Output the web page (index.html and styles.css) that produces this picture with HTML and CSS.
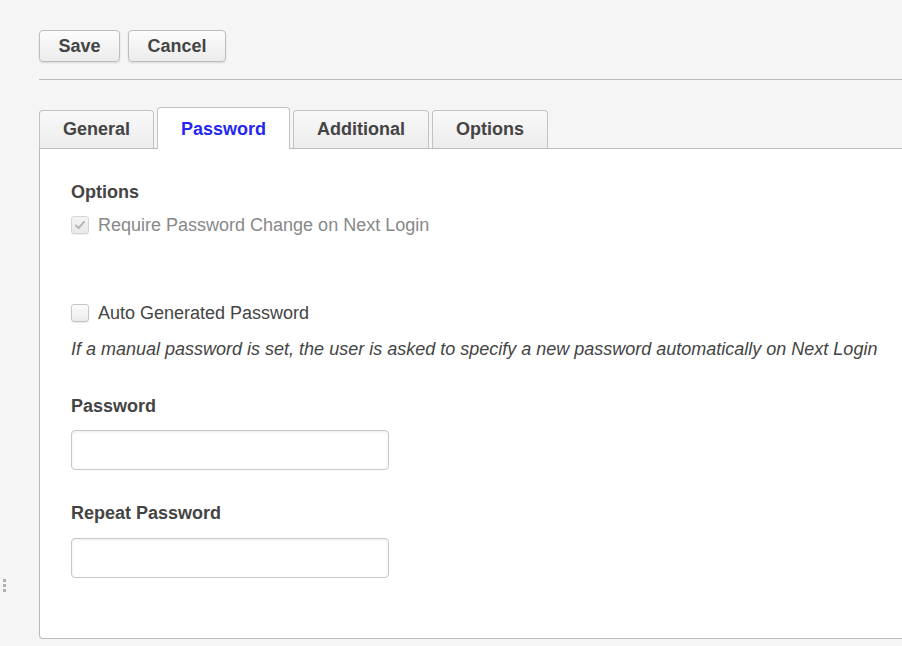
FILE: index.html
```html
<!DOCTYPE html>
<html lang="en">
<head>
<meta charset="utf-8">
<title>Edit User - Password</title>
<link rel="stylesheet" href="styles.css">
</head>
<body>
<div class="grip"><span></span><span></span><span></span></div>
<div class="page">
  <div class="toolbar">
    <button class="btn" type="button">Save</button>
    <button class="btn" type="button">Cancel</button>
  </div>
  <div class="divider"></div>
  <div class="tabs">
    <div class="tab">General</div>
    <div class="tab active">Password</div>
    <div class="tab">Additional</div>
    <div class="tab">Options</div>
  </div>
  <div class="panel">
    <div class="heading">Options</div>
    <div class="check-row disabled">
      <span class="box checked">
        <svg viewBox="0 0 18 18" width="18" height="18"><path d="M4.5 9.5 L7.5 12.5 L13.5 5.5" fill="none" stroke="#b5b5b5" stroke-width="2.2" stroke-linecap="round" stroke-linejoin="round"/></svg>
      </span>
      <span class="check-label">Require Password Change on Next Login</span>
    </div>
    <div class="check-row auto">
      <span class="box"></span>
      <span class="check-label">Auto Generated Password</span>
    </div>
    <div class="hint">If a manual password is set, the user is asked to specify a new password automatically on Next Login</div>
    <div class="heading field-label first">Password</div>
    <div class="input"></div>
    <div class="heading field-label">Repeat Password</div>
    <div class="input"></div>
  </div>
</div>
</body>
</html>
```

FILE: styles.css
```css
* { box-sizing: border-box; }

html, body {
  margin: 0;
  padding: 0;
}

body {
  background: #f5f5f5;
  font-family: "Liberation Sans", Arial, sans-serif;
  font-size: 18px;
  color: #444;
  width: 902px;
  height: 646px;
  overflow: hidden;
  position: relative;
}

.grip {
  position: absolute;
  left: 3px;
  top: 579px;
  display: flex;
  flex-direction: column;
  gap: 2px;
}
.grip span {
  display: block;
  width: 3px;
  height: 3px;
  background: #b0b0b0;
}

.page {
  padding: 30px 0 0 39px;
}

.toolbar {
  display: flex;
  gap: 8px;
}

.btn {
  height: 32px;
  padding: 0 18.5px;
  border: 1px solid #bdbdbd;
  border-radius: 4px;
  background: linear-gradient(#fcfcfc, #ececec);
  box-shadow: 0 1px 2px rgba(0,0,0,0.12);
  font-family: "Liberation Sans", Arial, sans-serif;
  font-weight: bold;
  font-size: 18px;
  color: #444;
  line-height: 30px;
}

.divider {
  margin-top: 17px;
  height: 1px;
  background: #bbb;
}

.tabs {
  margin-top: 27px;
  display: flex;
  align-items: flex-end;
  gap: 3px;
  height: 41px;
}

.tab {
  height: 38px;
  padding: 0 23px;
  border: 1px solid #c2c2c2;
  border-bottom: none;
  border-radius: 4px 4px 0 0;
  background: linear-gradient(#f9f9f9, #ececec);
  font-weight: bold;
  color: #444;
  line-height: 36px;
}

.tab.active {
  height: 42px;
  padding-top: 3px;
  margin-bottom: -1px;
  background: #fff;
  color: #2626f0;
  position: relative;
  z-index: 1;
}

.panel {
  background: #fff;
  border: 1px solid #bbb;
  border-right: none;
  border-radius: 0 0 0 4px;
  height: 491px;
  padding: 33px 0 0 31px;
}

.heading {
  font-weight: bold;
  line-height: 20px;
  color: #444;
}

.check-row {
  display: flex;
  align-items: center;
  height: 20px;
  gap: 9px;
}

.check-row.disabled {
  margin-top: 13px;
  color: #888;
}

.check-row.auto {
  margin-top: 68px;
}

.box {
  width: 18px;
  height: 18px;
  border: 1px solid #c4c4c4;
  border-radius: 3px;
  background: linear-gradient(#fbfbfb, #ebebeb);
  box-shadow: 0 1px 1px rgba(0,0,0,0.08);
  display: flex;
  align-items: center;
  justify-content: center;
}
.box svg { display: block; }

.check-row.disabled .box {
  border-color: #d6d6d6;
  background: linear-gradient(#f4f4f4, #e9e9e9);
}

.check-label {
  line-height: 20px;
}

.hint {
  margin-top: 16px;
  font-style: italic;
  line-height: 20px;
  color: #444;
}

.field-label {
  margin-top: 33px;
}
.field-label.first {
  margin-top: 37px;
}

.input {
  width: 318px;
  height: 40px;
  border: 1px solid #c8c8c8;
  border-radius: 4px;
  background: #fff;
  box-shadow: inset 0 1px 3px rgba(0,0,0,0.08);
}
.field-label + .input {
  margin-top: 15px;
}
.field-label.first + .input {
  margin-top: 14px;
}
```
